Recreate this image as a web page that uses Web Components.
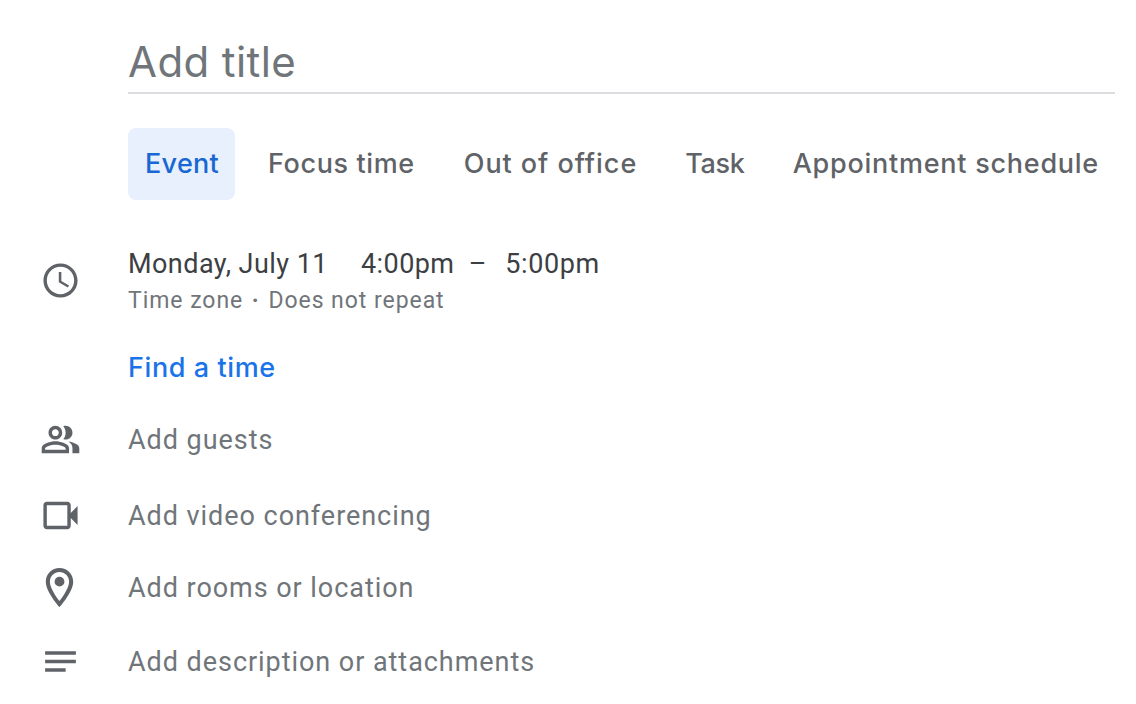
<!DOCTYPE html>
<html><head><meta charset="utf-8"><style>
html,body{margin:0;background:#fff}
body{width:1136px;height:704px;overflow:hidden;font-family:Roboto,sans-serif}
</style></head><body>
<event-form></event-form>
<template id="t-row"><style>
:host{display:grid;grid-template-columns:128px 1fr;align-items:center;color:#70757a;font:27px/36px Roboto,sans-serif;letter-spacing:.95px}
.i{display:flex;justify-content:center;padding-right:8px}
</style><div class="i"><slot name="icon"></slot></div><div><slot></slot></div></template>
<template id="t-tab"><style>
:host{display:block;height:72px;padding:0 17px;border-radius:8px;color:#5f6368;font:500 27px/72px Inter,Roboto,sans-serif;letter-spacing:var(--ls,.75px);margin-left:var(--ml,0);box-sizing:border-box;white-space:nowrap}
:host([active]){background:#e8f0fe;color:#1967d2;padding-right:16px}
</style><slot></slot></template>
<template id="t-form"><style>
:host{display:block;padding-top:32px}
.title{margin:0 21px 0 128px;height:60px;border-bottom:2px solid #dadce0;color:#70757a;font:42px/60px Inter,Roboto,sans-serif;letter-spacing:.4px}
.tabs{display:flex;gap:15px;margin:34px 0 0 128px}
.date{margin-top:45px}
.main{color:#3c4043;font:27px/38px Roboto,sans-serif;letter-spacing:.45px}
.sub{color:#70757a;font:23px/36px Roboto,sans-serif;letter-spacing:.95px}
.dot{margin:0 2px;font-weight:700}
.find{color:#1a73e8;font:500 27px/36px Inter,Roboto,sans-serif;letter-spacing:.6px;margin:31px 0 0 128px}
.gap{display:inline-block;width:33px}
.end{margin-left:4px;letter-spacing:.6px}
cal-row svg{width:41px;height:41px;fill:#5f6368;display:block}
cal-row svg.pin{width:47px;height:47px;margin:-3px -2px -3px -4px}
cal-row.date svg{margin-top:-4px}
cal-row.g{margin-top:33px}cal-row.v{margin-top:35px}cal-row.r{margin-top:31px}cal-row.d{margin-top:33px}
</style>
<div class="title">Add title</div>
<div class="tabs"><cal-tab active style="--ls:.3px">Event</cal-tab><cal-tab style="--ls:.6px;--ml:1px">Focus time</cal-tab><cal-tab style="--ls:.95px">Out of office</cal-tab><cal-tab style="--ls:-.3px;--ml:-1px">Task</cal-tab><cal-tab style="--ml:-1px">Appointment schedule</cal-tab></div>
<cal-row class="date"><svg slot="icon" viewBox="0 0 24 24"><path d="M11.99 2C6.47 2 2 6.48 2 12s4.47 10 9.99 10C17.52 22 22 17.52 22 12S17.52 2 11.99 2zM12 20c-4.42 0-8-3.58-8-8s3.58-8 8-8 8 3.58 8 8-3.58 8-8 8zM12.5 7H11v6l5.25 3.15.75-1.23-4.5-2.67z"/></svg><div class="main">Monday, July 11<span class="gap"></span>4:00pm &nbsp;–&nbsp; <span class="end">5:00pm</span></div><div class="sub">Time zone <span class="dot">·</span> Does not repeat</div></cal-row>
<div class="find">Find a time</div>
<cal-row class="g"><svg slot="icon" viewBox="0 0 24 24"><path d="M15 8c0-1.42-.5-2.73-1.33-3.76.42-.14.86-.24 1.33-.24 2.21 0 4 1.79 4 4s-1.79 4-4 4c-.43 0-.84-.09-1.23-.21-.03-.01-.06-.02-.1-.03C14.5 10.73 15 9.42 15 8zm1.66 5.13C18.03 14.06 19 15.32 19 17v3h4v-3c0-2.18-3.58-3.47-6.34-3.87zM9 6c-1.1 0-2 .9-2 2s.9 2 2 2 2-.9 2-2-.9-2-2-2m0-2c2.21 0 4 1.79 4 4s-1.79 4-4 4-4-1.79-4-4 1.79-4 4-4zm0 11c-2.7 0-5.8 1.29-6 2.01V18h12v-1c-.2-.71-3.3-2-6-2m0-2c2.67 0 8 1.34 8 4v3H1v-3c0-2.66 5.33-4 8-4z"/></svg>Add guests</cal-row>
<cal-row class="v"><svg slot="icon" viewBox="0 0 24 24"><path d="M18 10.48V6c0-1.1-.9-2-2-2H4c-1.1 0-2 .9-2 2v12c0 1.1.9 2 2 2h12c1.1 0 2-.9 2-2v-4.48l4 3.98v-11l-4 3.98zM16 18H4V6h12v12z"/></svg>Add video conferencing</cal-row>
<cal-row class="r"><svg class="pin" slot="icon" viewBox="0 0 24 24"><path d="M12 2C8.13 2 5 5.13 5 9c0 5.25 7 13 7 13s7-7.75 7-13c0-3.87-3.13-7-7-7zm0 2.1c2.7 0 4.9 2.2 4.9 4.9 0 2.88-2.88 7.19-4.9 9.88C9.92 16.21 7.1 11.85 7.1 9c0-2.7 2.2-4.9 4.9-4.9z"/><circle cx="12" cy="9" r="2.5"/></svg>Add rooms or location</cal-row>
<cal-row class="d"><svg slot="icon" viewBox="0 0 24 24"><path d="M3 18h12v-2H3v2zM3 6v2h18V6H3zm0 7h18v-2H3v2z"/></svg>Add description or attachments</cal-row>
</template>
<script>
const mk=(tag,id)=>customElements.define(tag,class extends HTMLElement{constructor(){super();this.attachShadow({mode:'open'}).append(document.getElementById(id).content.cloneNode(true))}});
mk('cal-row','t-row');mk('cal-tab','t-tab');mk('event-form','t-form');
</script>
</body></html>
